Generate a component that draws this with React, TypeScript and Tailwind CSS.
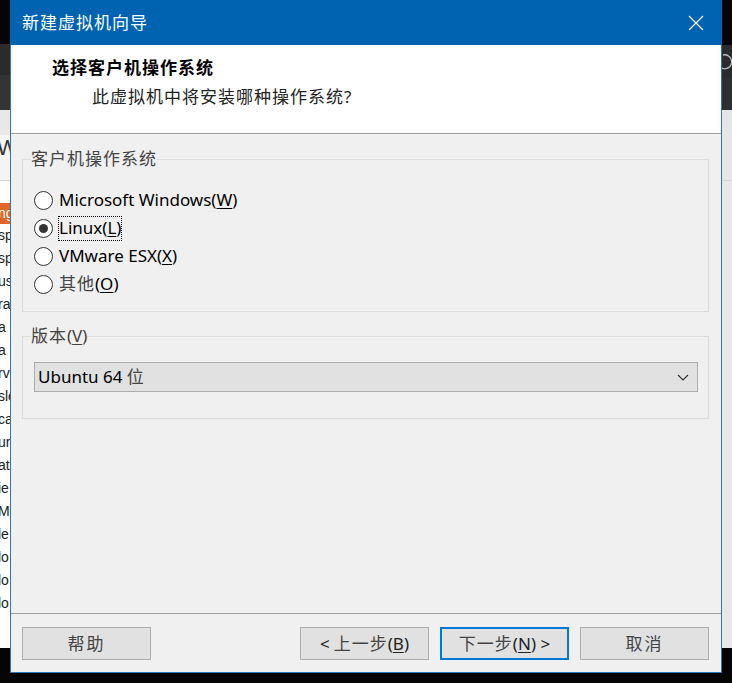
import React from 'react'

const FONT = "font-['Noto_Sans','Noto_Sans_CJK_SC',sans-serif]"

const LEFT_ROWS = ['sp', 'sp', 'us', 'ra', 'a', 'a', 'rv', 'sle', 'ca', 'ur', 'at', 'ie', 'Ma', 'le', 'lo', 'lo', 'lo']

function LeftStrip() {
  return (
    <div className="w-[10px] h-[683px] flex flex-col overflow-hidden shrink-0">
      <div className="h-[44px] bg-[#050505]" />
      <div className="h-[31px] bg-[#2b2b2b]" />
      <div className="h-[35px] bg-[#343434]" />
      <div className="h-[25px] bg-[#e8e8e8]" />
      <div className="h-[45px] bg-[#f4f4f4] pt-[2px]">
        <span className="block ml-[-3px] text-[22px] leading-[22px] text-[#333] font-['Liberation_Sans',sans-serif]">W</span>
      </div>
      <div className="h-px bg-[#d4d4d4]" />
      <div className="h-[22px] bg-white" />
      <div className="flex-1 bg-white flex flex-col">
        <div className="h-[21px] bg-[#e0662a] text-white text-[14px] leading-[21px] ml-0 pl-0 font-['Liberation_Sans',sans-serif]">
          <span className="ml-[-2px]">ng</span>
        </div>
        {LEFT_ROWS.map((t, i) => (
          <div key={i} className="h-[23px] text-[14px] leading-[23px] text-[#222] whitespace-nowrap font-['Liberation_Sans',sans-serif]">
            <span className="ml-[-2px]">{t}</span>
          </div>
        ))}
      </div>
      <div className="h-[35px] bg-[#050505] shrink-0" />
    </div>
  )
}

function RightStrip() {
  return (
    <div className="w-[10px] h-[683px] flex flex-col overflow-hidden shrink-0">
      <div className="h-[45px] bg-[#050505]" />
      <div className="h-[33px] bg-[#2b2b2b]">
        <svg width="10" height="33" viewBox="0 0 10 33">
          <path d="M1 10 A7 7 0 1 1 -2 22" fill="none" stroke="#bdbdbd" strokeWidth="1.3" />
        </svg>
      </div>
      <div className="h-[32px] bg-[#2e2e2e]" />
      <div className="h-[70px] bg-[#e6e6e6]" />
      <div className="h-px bg-[#d6d6d6]" />
      <div className="flex-1 bg-[#e8e8e8]" />
      <div className="h-[35px] bg-[#050505] shrink-0" />
    </div>
  )
}

function Radio({ checked, focus, children }: { checked?: boolean; focus?: boolean; children: React.ReactNode }) {
  return (
    <div className="h-[28px] flex items-center pl-[3px]">
      <span className="w-[19px] h-[19px] rounded-full border border-[#333] bg-white flex items-center justify-center shrink-0">
        {checked && <span className="w-[9px] h-[9px] rounded-full bg-[#333]" />}
      </span>
      <span
        className={`ml-[5px] h-[25px] flex items-center border border-dotted ${focus ? 'border-black' : 'border-transparent'} text-[17px] text-black`}
      >
        {children}
      </span>
    </div>
  )
}

function Button({ children, primary }: { children: React.ReactNode; primary?: boolean }) {
  return (
    <div
      className={`w-[129px] h-[33px] flex items-center justify-center bg-[#e1e1e1] text-[17px] text-[#222] ${
        primary ? 'border-2 border-[#0078d7]' : 'border border-[#adadad]'
      }`}
    >
      {children}
    </div>
  )
}

export default function App() {
  return (
    <div className={`w-[732px] h-[683px] flex bg-[#050505] overflow-hidden ${FONT}`}>
      <LeftStrip />

      <div className="w-[712px] h-[673px] flex flex-col border-x border-b border-[#2a78b6] bg-[#f0f0f0] shrink-0">
        {/* title bar */}
        <div className="h-[45px] -mx-px bg-[#0063b1] flex items-center justify-between pl-[12px] pr-[18px] shrink-0">
          <span className="text-white text-[17px] tracking-[1px]">新建虚拟机向导</span>
          <svg width="16" height="16" viewBox="0 0 16 16">
            <path d="M1 1 L15 15 M15 1 L1 15" stroke="white" strokeWidth="1.2" />
          </svg>
        </div>

        {/* header */}
        <div className="h-[88px] bg-white pt-[13px] shrink-0">
          <div className="ml-[41px] text-[17px] leading-[20px] font-bold tracking-[1px] text-black">选择客户机操作系统</div>
          <div className="ml-[81px] mt-[9px] text-[17px] leading-[20px] tracking-[1px] text-[#222]">此虚拟机中将安装哪种操作系统?</div>
        </div>
        <div className="h-px bg-[#a0a0a0] shrink-0" />

        {/* body */}
        <div className="flex-1 pl-[11px]">
          <fieldset className="mt-[15px] w-[687px] border border-[#dcdcdc] px-[8px] pb-[13px]">
            <legend className="text-[17px] leading-[20px] tracking-[1px] text-[#444]">客户机操作系统</legend>
            <div className="mt-[17px]">
              <Radio>
                Microsoft Windows(<u className="underline-offset-2">W</u>)
              </Radio>
              <Radio checked focus>
                Linux(<u className="underline-offset-2">L</u>)
              </Radio>
              <Radio>
                VMware ESX(<u className="underline-offset-2">X</u>)
              </Radio>
              <Radio>
                <span className="text-[#444] tracking-[1px]">其他</span>(<u className="underline-offset-2">O</u>)
              </Radio>
            </div>
          </fieldset>

          <fieldset className="mt-[14px] w-[687px] border border-[#dcdcdc] px-[8px] pb-[26px]">
            <legend className="text-[17px] leading-[20px] text-[#444]">
              <span className="tracking-[1px]">版本</span>(<u className="underline-offset-2">V</u>)
            </legend>
            <div className="mt-[16px] ml-[3px] w-[664px] h-[30px] bg-[#e1e1e1] border border-[#adadad] flex items-center justify-between pl-[3px] pr-[8px]">
              <span className="text-[17px] text-black">
                Ubuntu 64 <span className="text-[#444]">位</span>
              </span>
              <svg width="12" height="7" viewBox="0 0 12 7">
                <path d="M1 1 L6 6 L11 1" fill="none" stroke="#333" strokeWidth="1.1" />
              </svg>
            </div>
          </fieldset>
        </div>

        {/* footer */}
        <div className="h-px bg-[#a0a0a0] shrink-0" />
        <div className="h-[58px] flex items-start pt-[13px] pl-[11px] shrink-0">
          <Button>
            <span className="text-[#444] tracking-[2px]">帮助</span>
          </Button>
          <div className="ml-[149px] flex gap-[11px]">
            <Button>
              &lt; <span className="text-[#444] ml-[4px] tracking-[1px]">上一步</span>(<u className="underline-offset-2">B</u>)
            </Button>
            <Button primary>
              <span className="text-[#444] tracking-[1px]">下一步</span>(<u className="underline-offset-2">N</u>) &gt;
            </Button>
            <Button>
              <span className="text-[#444] tracking-[2px]">取消</span>
            </Button>
          </div>
        </div>
      </div>

      <RightStrip />
    </div>
  )
}
